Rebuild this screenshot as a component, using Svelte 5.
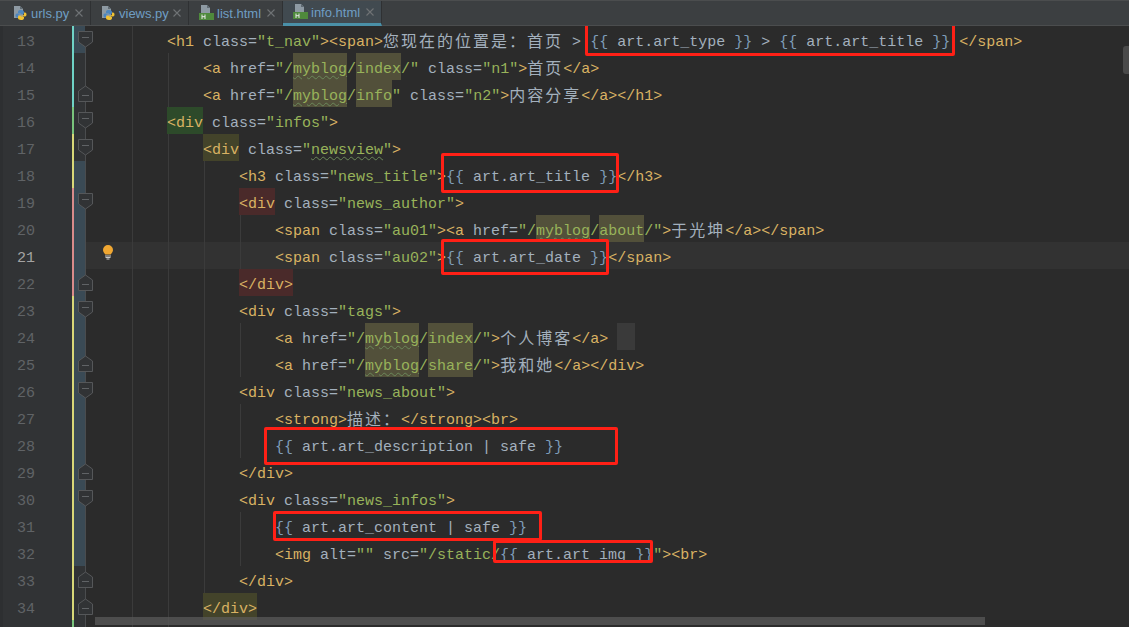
<script>
  const tabs = [
    { name: 'urls.py', kind: 'py' },
    { name: 'views.py', kind: 'py' },
    { name: 'list.html', kind: 'html' },
    { name: 'info.html', kind: 'html', active: true }
  ]

  // fold: o = opening marker, c = closing marker, s = straight line only
  // « » = usage highlight, ‹ › = typo underline, ⟪ ⟫ = selected whitespace
  const lines = [
    { n: 13, ind: 8, fold: 'o', src: '<h1 class="t_nav"><span>您现在的位置是：首页 > {{ art.art_type }} > {{ art.art_title }} </span>' },
    { n: 14, ind: 12, fold: 's', src: '<a href="/«myblog»/«index»/" class="n1">首页</a>' },
    { n: 15, ind: 12, fold: 'c', src: '<a href="/«myblog»/«info»" class="n2">内容分享</a></h1>' },
    { n: 16, ind: 8, fold: 'o', mark: 'green', markLen: 1, src: '<div class="infos">' },
    { n: 17, ind: 12, fold: 'o', mark: 'olive', markLen: 1, src: '<div class="‹newsview›">' },
    { n: 18, ind: 16, fold: 's', src: '<h3 class="news_title">{{ art.art_title }}</h3>' },
    { n: 19, ind: 16, fold: 'o', mark: 'red', markLen: 1, src: '<div class="news_author">' },
    { n: 20, ind: 20, fold: 's', src: '<span class="au01"><a href="/«myblog»/«about»/">于光坤</a></span>' },
    { n: 21, ind: 20, fold: 's', caret: true, src: '<span class="au02">{{ art.art_date }}</span>' },
    { n: 22, ind: 16, fold: 'c', mark: 'red', markLen: 2, src: '</div>' },
    { n: 23, ind: 16, fold: 'o', src: '<div class="tags">' },
    { n: 24, ind: 20, fold: 's', src: '<a href="/«myblog»/«index»/">个人博客</a> ⟪  ⟫' },
    { n: 25, ind: 20, fold: 'c', src: '<a href="/«myblog»/«share»/">我和她</a></div>' },
    { n: 26, ind: 16, fold: 'o', src: '<div class="news_about">' },
    { n: 27, ind: 20, fold: 's', src: '<strong>描述：</strong><br>' },
    { n: 28, ind: 20, fold: 's', src: '{{ art.art_description | safe }}' },
    { n: 29, ind: 16, fold: 'c', src: '</div>' },
    { n: 30, ind: 16, fold: 'o', src: '<div class="news_infos">' },
    { n: 31, ind: 20, fold: 's', src: '{{ art.art_content | safe }}' },
    { n: 32, ind: 20, fold: 's', src: '<img alt="" src="/static/{{ art.art_img }}"><br>' },
    { n: 33, ind: 16, fold: 'c', src: '</div>' },
    { n: 34, ind: 12, fold: 'c', mark: 'olive', markLen: 2, src: '</div>' },
    { n: 35, ind: 12, fold: 's', src: '', hideNum: true }
  ]

  const stripeOf = (n) => {
    if (n <= 15) return 'teal'
    if (n === 16 || n === 35) return 'lime'
    if (n >= 19 && n <= 22) return 'pink'
    return 'yellow'
  }
  const changed = (n) => n === 13 || (n >= 18 && n <= 32)

  const guides = (ind) => {
    const out = []
    for (let i = 4; i < ind; i += 4) out.push(i)
    return out
  }

  const tokenRe = /( > )|(<\/?[a-z0-9]+)|(>)|([a-z]+=)|("[^"]*(?:"|$))|(\{\{|\}\})|(⟪[^⟫]*⟫)|([^\x00-\x7f«»‹›⟪⟫]+)|([^<>{}"⟪]+?(?=[<>{}"⟪]|$| > ))/g

  function tokenize(line) {
    const out = []
    for (const m of line.src.matchAll(tokenRe)) {
      const text = m[0]
      if (m[1]) out.push({ cls: 'txt', text })
      else if (m[2] || m[3]) out.push({ cls: 'tag', text })
      else if (m[4]) out.push({ cls: 'attr', text })
      else if (m[5]) out.push(...splitValue(text))
      else if (m[6]) out.push({ cls: 'brace', text })
      else if (m[7]) out.push({ cls: 'sel', text: text.slice(1, -1) })
      else if (m[8]) out.push({ cls: 'cjk', text })
      else out.push({ cls: 'txt', text })
    }
    if (line.mark) {
      for (let i = 0; i < line.markLen; i++) out[i].mark = line.mark
    }
    return out
  }

  function splitValue(text) {
    // values may carry highlights and a template expression
    return text
      .split(/(«[^»]*»|‹[^›]*›|\{\{|\}\})/)
      .filter(Boolean)
      .map((part) => {
        if (part[0] === '«') {
          const word = part.slice(1, -1)
          return { cls: word === 'myblog' ? 'val usage wavy' : 'val usage', text: word }
        }
        if (part[0] === '‹') return { cls: 'val wavy', text: part.slice(1, -1) }
        if (part === '{{' || part === '}}') return { cls: 'brace', text: part }
        return { cls: part.includes('art.') ? 'txt' : 'val', text: part }
      })
  }

  const boxes = [
    { x: 585, y: 18, w: 370, h: 38 },
    { x: 441, y: 153, w: 178, h: 40 },
    { x: 441, y: 239, w: 168, h: 36 },
    { x: 264, y: 427, w: 354, h: 38 },
    { x: 273, y: 511, w: 269, h: 30 },
    { x: 493, y: 540, w: 160, h: 23 }
  ]
</script>

<main class="ide">
  <div class="tabs">
    {#each tabs as tab}
      <div class="tab" class:active={tab.active}>
        {#if tab.kind === 'py'}
          <svg class="ficon" width="16" height="16" viewBox="0 0 16 16">
            <path d="M1 1h6l3 3v9H1z" fill="#8e9aa3" />
            <path d="M7 1l3 3H7z" fill="#5f6a72" />
            <path d="M8 5c-2 0-3 .6-3 2v1h3v.6H4C3 8.600 2.500 9.500 2.500 10.500S3 12.500 4 12.500h1V11c0-1 .8-1.800 2-1.800h2.500c.9 0 1.500-.7 1.500-1.500V7c0-1.300-1.200-2-3-2z" fill="#4b86c0" />
            <path d="M8 15c2 0 3-.6 3-2v-1H8v-.6h4c1 0 1.500-.9 1.500-1.900s-.5-2-1.500-2h-1V9c0 1-.8 1.800-2 1.800H6.500C5.600 10.800 5 11.500 5 12.300V13c0 1.300 1.200 2 3 2z" fill="#f1c232" />
          </svg>
        {:else}
          <svg class="ficon" width="16" height="16" viewBox="0 0 16 16">
            <path d="M2 0h6l3 3v5H2z" fill="#8e9aa3" />
            <path d="M8 0l3 3H8z" fill="#5f6a72" />
            <rect x="0" y="8" width="15" height="7" fill="#4f8a3c" />
            <path d="M3 9.500v4.500M3 11.700h3M6 9.500v4.500" stroke="#e8e8e8" stroke-width="1" fill="none" />
          </svg>
        {/if}
        <span class="tname">{tab.name}</span>
        <svg class="close" width="8" height="8" viewBox="0 0 8 8">
          <path d="M.5.500l7 7M7.500.500l-7 7" stroke="#6f7375" stroke-width="1.100" />
        </svg>
      </div>
    {/each}
  </div>

  <div class="editor">
    {#each lines as line}
      <div class="row" class:caret={line.caret}>
        <div class="num" class:cur={line.caret}>{line.hideNum ? '' : line.n}</div>
        <div class="stripe {stripeOf(line.n)}"></div>
        <div class="fold" class:changed={changed(line.n)}>
          <div class="fline" class:top={line.n === 13}></div>
          {#if line.fold === 'o'}
            <svg class="fmark" width="15" height="17" viewBox="0 0 15 17">
              <path d="M.5.500h14v10.500l-7 5-7-5z" fill="#313335" stroke="#555759" />
              <path d="M4 6.500h7" stroke="#606366" />
            </svg>
          {:else if line.fold === 'c'}
            <svg class="fmark" width="15" height="17" viewBox="0 0 15 17">
              <path d="M.5 16.500h14V6l-7-5-7 5z" fill="#313335" stroke="#555759" />
              <path d="M4 10.500h7" stroke="#606366" />
            </svg>
          {/if}
          {#if line.n === 21}
            <svg class="bulb" width="12" height="15" viewBox="0 0 12 15">
              <path d="M6 0a5 5 0 0 1 5 5c0 2-1.400 3.200-2.300 4.500H3.300C2.400 8.200 1 7 1 5a5 5 0 0 1 5-5z" fill="#f0a732" />
              <path d="M3 11h6M3.500 12.500h5M4.500 14h3" stroke="#c9c9c9" />
            </svg>
          {/if}
        </div>
        <div class="code">
          {#each guides(line.ind) as g}
            <i class="guide" style="left: {g * 9 + 1}px"></i>
          {/each}
          <span class="indent" style="width: {line.ind * 9}px"></span>{#each tokenize(line) as tok}<span class="{tok.cls} {tok.mark ?? ''}">{tok.text}</span>{/each}
        </div>
      </div>
    {/each}

    {#each boxes as b}
      <div class="redbox" style="left: {b.x}px; top: {b.y - 26}px; width: {b.w}px; height: {b.h}px"></div>
    {/each}
    <div class="hbar"></div>
    <div class="vbar"></div>
  </div>
</main>

<style>
  :global(body) {
    margin: 0;
    background: #2b2b2b;
  }

  .ide {
    width: 1129px;
    height: 627px;
    overflow: hidden;
    display: flex;
    flex-direction: column;
  }

  .tabs {
    height: 26px;
    flex: none;
    display: flex;
    padding-left: 3px;
    background: #3c3f41;
    border-top: 1px solid #4b4d4e;
    box-sizing: border-box;
    border-bottom: 1px solid #4b4d4e;
  }

  .tab {
    display: flex;
    align-items: center;
    height: 24px;
    padding: 0 7px 0 10px;
    gap: 2px;
    border-right: 1px solid #2f3133;
    box-sizing: border-box;
    font: 13px "Liberation Sans", sans-serif;
    color: #6f9ec4;
  }

  .tab:nth-child(1) { width: 88px; }
  .tab:nth-child(2) { width: 98px; }
  .tab:nth-child(3) { width: 94px; }
  .tab:nth-child(4) { width: 99px; }

  .tab.active {
    background: #414a50;
    border-bottom: 3px solid #4a90a8;
    height: 25px;
  }

  .tname {
    flex: 1;
  }

  .ficon {
    flex: none;
  }

  .close {
    flex: none;
  }

  .editor {
    position: relative;
    flex: 1;
    min-height: 0;
    overflow: hidden;
    background: #2b2b2b;
  }

  .row {
    display: flex;
    height: 27px;
    font: 15px/27px "Liberation Mono", monospace;
    color: #a9b7c6;
  }

  .num {
    width: 72px;
    flex: none;
    box-sizing: border-box;
    padding: 3px 0 0 14px;
    background: #313335;
    color: #606366;
    font-size: 15px;
    line-height: 27px;
    border-left: 3px solid #2d2f31;
  }

  .num.cur {
    color: #a4a3a3;
  }

  .stripe {
    width: 2px;
    flex: none;
  }
  .teal { background: #6fd3c6; }
  .lime { background: #79c47c; }
  .pink { background: #d98b8b; }
  .yellow { background: #d8d878; }

  .fold {
    position: relative;
    width: 21px;
    flex: none;
    background: linear-gradient(90deg, #313335 11px, #2b2b2b 11px);
  }

  .fold.changed {
    background: linear-gradient(90deg, #3a4a55 11px, #2b2b2b 11px);
  }

  .fline {
    position: absolute;
    left: 11px;
    top: 0;
    bottom: 0;
    width: 1px;
    background: #4a4c4e;
  }

  .fline.top {
    top: 14px;
  }

  .fmark {
    position: absolute;
    left: 4px;
    top: 5px;
  }

  .bulb {
    position: absolute;
    left: 28px;
    top: 3px;
    z-index: 1;
  }

  .code {
    position: relative;
    flex: 1;
    white-space: nowrap;
    min-width: 0;
  }

  .caret .code {
    background: #323232;
  }

  .caret .fold.changed {
    background: linear-gradient(90deg, #3a4a55 11px, #323232 11px);
  }

  .indent {
    display: inline-block;
  }

  .guide {
    position: absolute;
    top: 0;
    bottom: 0;
    width: 1px;
    background: #3b3b3b;
  }

  .code span {
    display: inline-block;
    height: 27px;
    line-height: 34px;
    vertical-align: top;
    white-space: pre;
  }

  .tag { color: #d9b263; }
  .attr { color: #a9b7c6; }
  .val { color: #98b35a; }
  .txt { color: #a3b0bd; }
  .brace { color: #7f9db9; }

  .code .cjk {
    font-family: "Noto Sans CJK SC", sans-serif;
    font-size: 16px;
    letter-spacing: 2px;
    line-height: 28px;
    color: #a3b0bd;
  }

  .usage { background: #52503a; }
  .sel { background: #3a3a3a; }
  .wavy {
    text-decoration: underline wavy #6a8759 1px;
    text-underline-offset: 2px;
  }

  .olive { background: #43432a; }
  .red { background: #4a2a2a; }
  .green { background: #2d4a2a; }

  .redbox {
    position: absolute;
    box-sizing: border-box;
    border: 3px solid #ff2016;
    border-radius: 2px;
  }

  .hbar {
    position: absolute;
    left: 95px;
    top: 591px;
    width: 890px;
    height: 8px;
    background: rgba(90, 90, 90, 0.75);
  }

  .vbar {
    position: absolute;
    right: 0;
    top: 20px;
    width: 6px;
    height: 28px;
    background: #4a4a4a;
    border-radius: 3px 0 0 3px;
  }
</style>
